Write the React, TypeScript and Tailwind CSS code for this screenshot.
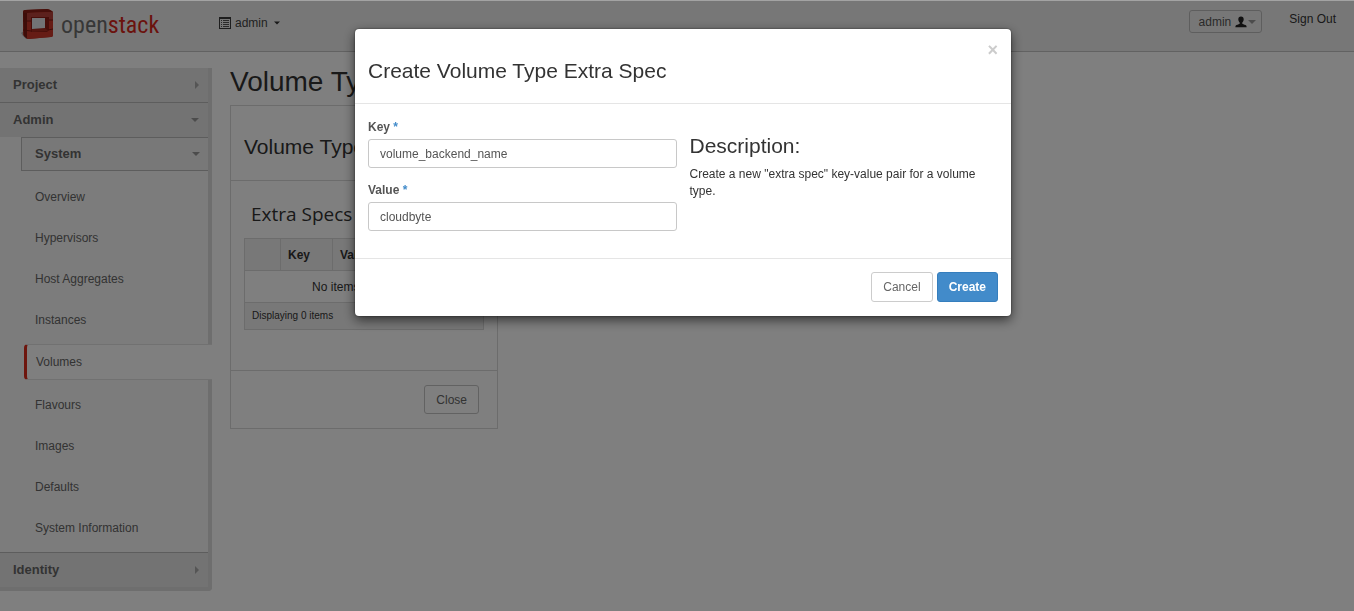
import React, { useState } from "react";

const systemLinks = [
  "Overview",
  "Hypervisors",
  "Host Aggregates",
  "Instances",
  "Volumes",
  "Flavours",
  "Images",
  "Defaults",
  "System Information",
];

function CubeLogo() {
  return (
    <svg width="34" height="34" viewBox="0 0 34 34" className="shrink-0" aria-hidden="true">
      <path d="M0 25 L4 22 L5 31 L2 28 Z" fill="#b5b5b5" />
      <path d="M2 4 Q2 2 4 2 L26 1 Q28 1 31 3 L32 4 L32 27 Q32 29 30 29 L8 31 Q6 31 4 29 L2 27 Z" fill="#b0352a" />
      <path d="M2 4 Q2 2 4 2 L26 1 Q28 1 32 4 L6 5 Z" fill="#8c1f16" />
      <path d="M2 4 L6 5 L6 31 L3 28 Z" fill="#7c1a12" />
      <path d="M6 5 L32 4 L32 27 Q32 29 30 29 L6 31 Z" fill="#cc382b" />
      <path d="M6 5 L32 4 L32 12 L6 13 Z" fill="#b8433a" />
      <path d="M10 9 L28 9 L28 22 L26 24 L10 24 Z" fill="#8f1d14" />
      <path d="M11 21 L24 20 L27 23 L11 24 Z" fill="#a82c20" />
      <path d="M11 10 L24 10 L24 20 L11 21 Z" fill="#e4e6ea" />
      <path d="M2 13 L10 13 M2 22 L10 23 M28 12 L32 12 M27 22 L32 21" stroke="#7d160e" strokeWidth="1" fill="none" />
    </svg>
  );
}

function ListIcon() {
  return (
    <svg width="12" height="12" viewBox="0 0 12 12" aria-hidden="true">
      <path d="M0 0h12v12H0z M1 2v9h10V2z" fillRule="evenodd" fill="#3c3c3c" />
      <path d="M2 3h1v1H2z M4 3h6v1H4z M2 5h1v1H2z M4 5h6v1H4z M2 7h1v1H2z M4 7h6v1H4z M2 9h1v1H2z M4 9h6v1H4z" fill="#555" />
    </svg>
  );
}

function UserIcon() {
  return (
    <svg width="12" height="12" viewBox="0 0 12 12" aria-hidden="true">
      <path
        d="M6 0.5C7.8 0.5 8.8 1.8 8.7 3.6C8.6 5 8 6 7.3 6.6V7.8C8.6 8.5 10.6 8.9 11.2 9.6C11.6 10.1 11.6 11 11.6 11.3H0.4C0.4 11 0.4 10.1 0.8 9.6C1.4 8.9 3.4 8.5 4.7 7.8V6.6C4 6 3.4 5 3.3 3.6C3.2 1.8 4.2 0.5 6 0.5Z"
        fill="#222"
      />
    </svg>
  );
}

function CaretDown({ className = "" }: { className?: string }) {
  return (
    <svg width="8" height="4" viewBox="0 0 8 4" className={className} aria-hidden="true">
      <path d="M0 0h8L4 4z" fill="currentColor" />
    </svg>
  );
}

function CaretRight({ className = "" }: { className?: string }) {
  return (
    <svg width="4" height="8" viewBox="0 0 4 8" className={className} aria-hidden="true">
      <path d="M0 0v8l4-4z" fill="currentColor" />
    </svg>
  );
}

function TopBar() {
  return (
    <header className="flex h-[51px] items-start border-b border-[#c4c4c4] bg-[#efefef]">
      <a href="#home" className="ml-[21px] mt-2 flex h-8 w-[136px] items-center gap-1.5" aria-label="openstack">
        <CubeLogo />
        <span className="font-['Roboto_Condensed','Open_Sans_Condensed','Noto_Sans_Condensed','Liberation_Sans_Narrow','DejaVu_Sans_Condensed',sans-serif] text-[24px] leading-8 text-[#6e6e6e]">
          open<span className="text-[#d6271b]">stack</span>
        </span>
      </a>
      <button type="button" className="ml-[62px] mt-[14px] flex h-4 items-center gap-1 text-[#444]">
        <ListIcon />
        <span>admin</span>
        <CaretDown className="ml-0.5 w-1.5 text-[#333]" />
      </button>
      <div className="ml-auto flex items-start pr-[18px]">
        <button
          type="button"
          className="mt-[9px] flex h-[23px] items-center rounded-[3px] border border-[#bdbdbd] pl-[9px] pr-[5px] text-[#555]"
        >
          <span>admin</span>
          <span className="ml-1">
            <UserIcon />
          </span>
          <CaretDown className="ml-px text-[#999]" />
        </button>
        <a href="#signout" className="ml-[27px] mt-[10px] leading-4 text-[#333]">
          Sign Out
        </a>
      </div>
    </header>
  );
}

function Sidebar() {
  return (
    <nav className="mt-4 w-[212px] shrink-0 self-start rounded-br-sm border-r-4 border-b-4 border-[#dcdcdc] bg-[#f9f9f9] text-[#666]">
      <button
        type="button"
        className="flex h-[35px] w-full items-center justify-between border-b border-[#bababa] bg-[#e6e6e6] pl-[13px] pr-[9px] text-[13px] font-bold"
      >
        Project
        <CaretRight className="text-[#aaa]" />
      </button>
      <button
        type="button"
        className="flex h-[34px] w-full items-center justify-between bg-[#e6e6e6] pl-[13px] pr-[9px] text-[13px] font-bold"
      >
        Admin
        <CaretDown className="text-[#999]" />
      </button>
      <div className="pl-[21px]">
        <button
          type="button"
          className="flex h-[34px] w-full items-center justify-between border-y border-l border-[#bababa] bg-[#f1f1f1] pl-[13px] pr-2 text-[13px] font-bold"
        >
          System
          <CaretDown className="text-[#999]" />
        </button>
      </div>
      <ul className="pb-1 pt-[5px]">
        {systemLinks.map((name) =>
          name === "Volumes" ? (
            <li key={name} className="my-1 -mr-1 ml-6">
              <a
                href="#volumes"
                aria-current="page"
                className="flex h-9 items-center rounded-l-sm border-y border-l-[3px] border-y-[#e2e2e2] border-l-[#dd2c1c] bg-white pl-[9px]"
              >
                {name}
              </a>
            </li>
          ) : (
            <li key={name}>
              <a href="#system" className="flex h-[41px] items-center pl-[35px]">
                {name}
              </a>
            </li>
          ),
        )}
      </ul>
      <button
        type="button"
        className="flex h-[35px] w-full items-center justify-between border-t border-[#bababa] bg-[#e6e6e6] pl-[13px] pr-[9px] text-[13px] font-bold"
      >
        Identity
        <CaretRight className="text-[#aaa]" />
      </button>
    </nav>
  );
}

function ExtraSpecs() {
  return (
    <main className="ml-[18px] mt-3">
      <h1 className="text-[28px] leading-9 text-[#333]">Volume Type</h1>
      <section className="mt-[5px] w-[268px] border border-[#d8d8d8] bg-white text-[#333]">
        <div className="flex h-[75px] items-center overflow-hidden whitespace-nowrap border-b border-[#d8d8d8] px-[13px] pt-2">
          <h2 className="text-[21px] leading-6">Volume Type Extra</h2>
        </div>
        <div className="h-[190px] border-b border-[#d8d8d8] px-[13px] pt-5">
          <h3 className="pl-[7px] font-['Open_Sans','Noto_Sans',sans-serif] text-[19px] leading-[26px]">Extra Specs</h3>
          <table className="mt-[11px] w-full table-fixed border-collapse border border-[#d8d8d8]">
            <thead>
              <tr className="h-8 bg-[#f0f0f0] text-left">
                <th className="w-9 border border-[#d8d8d8]" aria-label="Select" />
                <th className="w-[52px] border border-[#d8d8d8] px-[7px]">Key</th>
                <th className="border border-[#d8d8d8] px-[7px]">Value</th>
                <th className="border border-[#d8d8d8] px-[7px]">Actions</th>
              </tr>
            </thead>
            <tbody>
              <tr className="h-8">
                <td colSpan={4} className="border border-[#d8d8d8] text-center">
                  No items to display.
                </td>
              </tr>
            </tbody>
            <tfoot>
              <tr className="h-[27px] bg-[#f0f0f0]">
                <td colSpan={4} className="px-[7px] text-[10px]">
                  Displaying 0 items
                </td>
              </tr>
            </tfoot>
          </table>
        </div>
        <div className="flex justify-end px-[18px] py-[14px]">
          <button type="button" className="h-[29px] rounded-[3px] border border-[#c4c4c4] px-[11px] text-[#666]">
            Close
          </button>
        </div>
      </section>
    </main>
  );
}

function Field({
  id,
  label,
  value,
  onChange,
}: {
  id: string;
  label: string;
  value: string;
  onChange: (v: string) => void;
}) {
  return (
    <div>
      <label htmlFor={id} className="block pb-1 font-bold leading-4 text-[#555]">
        {label} <span className="text-[#428bca]">*</span>
      </label>
      <input
        id={id}
        type="text"
        value={value}
        onChange={(e) => onChange(e.target.value)}
        className="block h-[29px] w-full rounded-[3px] border border-[#c8c8c8] bg-white px-[11px] text-[#555] outline-none"
      />
    </div>
  );
}

function CreateDialog() {
  const [key, setKey] = useState("volume_backend_name");
  const [value, setValue] = useState("cloudbyte");
  return (
    <div className="fixed inset-x-0 bottom-0 top-px flex items-start justify-center bg-black/50 pl-3 pt-7">
      <form
        role="dialog"
        aria-labelledby="dialog-title"
        onSubmit={(e) => e.preventDefault()}
        className="w-full max-w-[656px] rounded bg-white shadow-[0_4px_12px_rgba(0,0,0,0.6),0_0_2px_rgba(0,0,0,0.6)]"
      >
        <div className="flex h-[75px] items-start justify-between border-b border-[#e5e5e5] px-[13px] pt-[13px]">
          <h2 id="dialog-title" className="pt-4 text-[21px] leading-[26px] text-[#333]">
            Create Volume Type Extra Spec
          </h2>
          <button type="button" aria-label="Close dialog" className="text-[18px] font-bold leading-4 text-[#ccc]">
            ×
          </button>
        </div>
        <div className="grid grid-cols-2 gap-[13px] px-[13px] pb-[27px] pt-[15px]">
          <div className="flex flex-col gap-[14px]">
            <Field id="spec-key" label="Key" value={key} onChange={setKey} />
            <Field id="spec-value" label="Value" value={value} onChange={setValue} />
          </div>
          <div className="pt-[14px] text-[#333]">
            <h3 className="text-[21px] leading-[26px]">Description:</h3>
            <p className="mt-[7px] leading-[17px]">Create a new "extra spec" key-value pair for a volume type.</p>
          </div>
        </div>
        <div className="flex justify-end gap-1 border-t border-[#e5e5e5] px-[13px] pb-[14px] pt-[13px]">
          <button type="button" className="h-[30px] rounded-[3px] border border-[#ccc] bg-white px-[11px] text-[#666]">
            Cancel
          </button>
          <button
            type="submit"
            className="h-[30px] rounded-[3px] border border-[#357ebd] bg-[#428bca] px-[11px] font-bold text-white"
          >
            Create
          </button>
        </div>
      </form>
    </div>
  );
}

export default function App() {
  return (
    <div className="min-h-screen border-t border-[#a3a3a3] bg-white font-['Liberation_Sans',Arial,sans-serif] text-[12px] leading-4">
      <TopBar />
      <div className="flex">
        <Sidebar />
        <ExtraSpecs />
      </div>
      <CreateDialog />
    </div>
  );
}
